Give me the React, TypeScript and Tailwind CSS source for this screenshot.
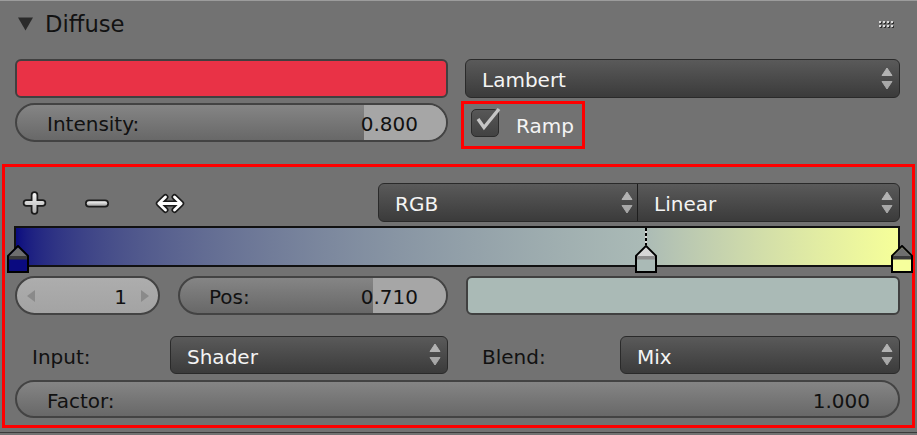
import React from "react";

function UpDown() {
  return (
    <svg width="12" height="24" viewBox="0 0 12 24" className="shrink-0">
      <path d="M6 1 L11 8.5 H1 Z" fill="#b2b2b2" stroke="#b2b2b2" strokeWidth="1" strokeLinejoin="round" />
      <path d="M1 14.5 H11 L6 22 Z" fill="#a8a8a8" stroke="#a8a8a8" strokeWidth="1" strokeLinejoin="round" />
    </svg>
  );
}

function Dropdown({ label, className }: { label: string; className: string }) {
  return (
    <div
      className={`flex items-center rounded-[6px] border border-[#2a2a2a] bg-linear-to-b from-[#5a5a5a] to-[#3b3b3b] pl-[16px] pr-[6px] ${className}`}
    >
      <span className="mt-[3px] text-[20px] text-[#f4f4f4] leading-none">{label}</span>
      <div className="ml-auto">
        <UpDown />
      </div>
    </div>
  );
}

function Slider({
  label,
  value,
  split,
  className,
}: {
  label: string;
  value: string;
  split?: number;
  className: string;
}) {
  return (
    <div
      className={`relative flex items-center overflow-hidden rounded-full border-2 border-[#434343] bg-linear-to-b from-[#858585] to-[#686868] ${className}`}
    >
      {split !== undefined && (
        <div className="absolute inset-y-0 right-0 bg-[#a6a6a6]" style={{ left: `${split}%` }} />
      )}
      <span className="relative mt-[3px] pl-[30px] text-[20px] leading-none text-[#111111]">{label}</span>
      <span className="relative ml-auto mt-[3px] pr-[28px] text-[20px] leading-none text-[#111111]">{value}</span>
    </div>
  );
}

function Marker({ fill, tri, band }: { fill: string; tri: string; band: string }) {
  return (
    <svg width="22" height="28" viewBox="0 0 22 28">
      <path d="M11 1 L21 11 V27 H1 V11 Z" fill={fill} stroke="#000" strokeWidth="2" />
      <path d="M11 2.6 L19.9 11.2 H2.1 Z" fill={tri} />
      <rect x="2" y="11" width="18" height="3.5" fill={band} />
    </svg>
  );
}

function PlusIcon() {
  return (
    <svg width="25" height="24" viewBox="0 0 25 24">
      <defs>
        <linearGradient id="wg1" x1="0" y1="0" x2="0" y2="24" gradientUnits="userSpaceOnUse">
          <stop offset="0" stopColor="#ffffff" />
          <stop offset="1" stopColor="#a9a9a9" />
        </linearGradient>
      </defs>
      <path d="M12.5 4 V20 M4.5 12 H20.5" stroke="#1c1c1c" strokeWidth="7.5" strokeLinecap="round" fill="none" />
      <path d="M12.5 4 V20 M4.5 12 H20.5" stroke="url(#wg1)" strokeWidth="4" strokeLinecap="round" fill="none" />
    </svg>
  );
}

function MinusIcon() {
  return (
    <svg width="24" height="9" viewBox="0 0 24 9">
      <defs>
        <linearGradient id="wg2" x1="0" y1="2" x2="0" y2="7" gradientUnits="userSpaceOnUse">
          <stop offset="0" stopColor="#ffffff" />
          <stop offset="1" stopColor="#9f9f9f" />
        </linearGradient>
      </defs>
      <path d="M4 4.5 H20" stroke="#1c1c1c" strokeWidth="8" strokeLinecap="round" fill="none" />
      <path d="M4 4.5 H20" stroke="url(#wg2)" strokeWidth="4.5" strokeLinecap="round" fill="none" />
    </svg>
  );
}

function SwapIcon() {
  const d = "M5 10.5 H27 M11.5 4 L4.8 10.5 L11.5 17 M20.5 4 L27.2 10.5 L20.5 17";
  return (
    <svg width="32" height="21" viewBox="0 0 32 21">
      <path d={d} stroke="#1c1c1c" strokeWidth="6" strokeLinecap="round" strokeLinejoin="round" fill="none" />
      <path d={d} stroke="#ffffff" strokeWidth="2.8" strokeLinecap="round" strokeLinejoin="round" fill="none" />
    </svg>
  );
}

function Grip() {
  const dots = [];
  for (let r = 0; r < 2; r++) {
    for (let c = 0; c < 4; c++) {
      dots.push(
        <g key={`${r}-${c}`}>
          <rect x={c * 4 + 1} y={r * 4 + 1} width="2" height="2" fill="#2e2e2e" />
          <rect x={c * 4} y={r * 4} width="2" height="2" fill="#dcdcdc" />
        </g>
      );
    }
  }
  return (
    <svg width="16" height="8" viewBox="0 0 16 8">
      {dots}
    </svg>
  );
}

export default function App() {
  return (
    <div className="font-['DejaVu_Sans','Liberation_Sans',sans-serif] flex h-[435px] w-[917px] flex-col overflow-hidden bg-[#727272]">
      <div className="h-px bg-[#9c9c9c]" />
      {/* Header */}
      <div className="flex h-[44px] items-center pl-[18px] pr-[22px]">
        <svg width="15" height="14" viewBox="0 0 15 14" className="mt-[1px]">
          <path d="M0 0.5 H15 L7.5 13.5 Z" fill="#2a2a2a" />
        </svg>
        <span className="ml-[12px] mt-[2px] text-[22.7px] leading-none text-[#121212]">Diffuse</span>
        <div className="ml-auto mt-[4px]">
          <Grip />
        </div>
      </div>

      {/* Row 1 */}
      <div className="mt-[14px] flex h-[39px] gap-[17px] pl-[15px] pr-[17px]">
        <div className="w-[433px] rounded-[6px] border-2 border-[#404040] bg-[#e93246]" />
        <Dropdown label="Lambert" className="w-[435px]" />
      </div>

      {/* Row 2 */}
      <div className="mt-[5px] flex h-[39px] gap-[17px] pl-[15px] pr-[17px]">
        <Slider label="Intensity:" value="0.800" split={80.8} className="w-[433px]" />
        <div className="-ml-[4px] -mt-[2px] flex h-[48px] w-[124px] items-center border-[3px] border-[#ff0000] pl-[7px]">
          <div className="relative mb-[4px] h-[28px] w-[28px] shrink-0 rounded-[5px] border border-[#2c2c2c] bg-linear-to-b from-[#575757] to-[#424242]">
            <svg
              width="30"
              height="26"
              viewBox="0 0 30 26"
              className="absolute left-0 top-[-3px] overflow-visible"
            >
              <path d="M6 12 L12 20.5 L27 2" stroke="#c6c6c6" strokeWidth="3.4" fill="none" strokeLinejoin="miter" />
            </svg>
          </div>
          <span className="ml-[17px] mt-[2px] text-[20px] leading-none text-[#f4f4f4]">Ramp</span>
        </div>
      </div>

      {/* Ramp section */}
      <div className="mx-[2px] mt-[22px] flex flex-col border-[3px] border-[#ff0000] pb-[7px] pl-[10px] pr-[12px] pt-[16px]">
        {/* toolbar */}
        <div className="flex h-[39px] items-center">
          <div className="ml-[7px] mt-[1px]">
            <PlusIcon />
          </div>
          <div className="ml-[38px] mt-[1px]">
            <MinusIcon />
          </div>
          <div className="ml-[45px] mt-[1px]">
            <SwapIcon />
          </div>
          <div className="ml-auto flex h-full w-[522px] rounded-[6px] border border-[#2a2a2a] bg-linear-to-b from-[#5a5a5a] to-[#3b3b3b]">
            <div className="flex w-[258px] items-center pl-[16px] pr-[4px]">
              <span className="mt-[3px] text-[20px] leading-none text-[#f4f4f4]">RGB</span>
              <div className="ml-auto">
                <UpDown />
              </div>
            </div>
            <div className="w-px bg-[#1e1e1e]" />
            <div className="flex flex-1 items-center pl-[16px] pr-[6px]">
              <span className="mt-[3px] text-[20px] leading-none text-[#f4f4f4]">Linear</span>
              <div className="ml-auto">
                <UpDown />
              </div>
            </div>
          </div>
        </div>

        {/* gradient */}
        <div className="relative -ml-px mt-[4px] h-[41px] w-[886px] border-2 border-[#111111] bg-[linear-gradient(in_srgb-linear_to_right,#0a0a80,#aabab6_71%,#f6ff99)]">
          <div className="absolute left-[629px] top-0 h-[17px] w-[2px] bg-[repeating-linear-gradient(to_bottom,#000_0_3px,#d8d8d8_3px_5px)]" />
          <div className="absolute left-[-9px] top-[17px]">
            <Marker fill="#0a0a80" tri="#6e6e6e" band="#3a3a3a" />
          </div>
          <div className="absolute left-[619px] top-[17px]">
            <Marker fill="#aabab6" tri="#d6d6d6" band="#8e8e8e" />
          </div>
          <div className="absolute left-[875px] top-[17px]">
            <Marker fill="#f6ff9c" tri="#6e6e6e" band="#3a3a3a" />
          </div>
        </div>

        {/* row 3 */}
        <div className="mt-[9px] flex h-[39px]">
          <div className="flex w-[145px] items-center rounded-full border-2 border-[#434343] bg-linear-to-b from-[#adadad] to-[#a3a3a3] pl-[10px] pr-[9px]">
            <svg width="8" height="12" viewBox="0 0 8 12">
              <path d="M8 0 L0 6 L8 12 Z" fill="#8a8a8a" />
            </svg>
            <span className="ml-auto mt-[3px] text-[20px] leading-none text-[#111111]">1</span>
            <svg width="8" height="12" viewBox="0 0 8 12" className="ml-[14px]">
              <path d="M0 0 L8 6 L0 12 Z" fill="#8a8a8a" />
            </svg>
          </div>
          <Slider label="Pos:" value="0.710" split={72.6} className="ml-[18px] w-[270px] [&>span:first-of-type]:pl-[29px]" />
          <div className="ml-[18px] w-[434px] rounded-[6px] border-2 border-[#404040] bg-[#aabab6]" />
        </div>

        {/* row 4 */}
        <div className="mt-[21px] flex h-[38px] items-stretch">
          <div className="flex w-[155px] items-center pl-[17px]">
            <span className="mt-[3px] text-[20px] leading-none text-[#111111]">Input:</span>
          </div>
          <Dropdown label="Shader" className="w-[278px]" />
          <div className="flex w-[172px] items-center pl-[34px]">
            <span className="mt-[3px] text-[20px] leading-none text-[#111111]">Blend:</span>
          </div>
          <Dropdown label="Mix" className="w-[280px]" />
        </div>

        {/* row 5 */}
        <div className="mt-[6px] flex h-[38px]">
          <Slider label="Factor:" value="1.000" className="w-full" />
        </div>
      </div>

      <div className="mt-[4px] h-px bg-[#3a3a3a]" />
      <div className="flex-1 bg-[#727272]" />
    </div>
  );
}
